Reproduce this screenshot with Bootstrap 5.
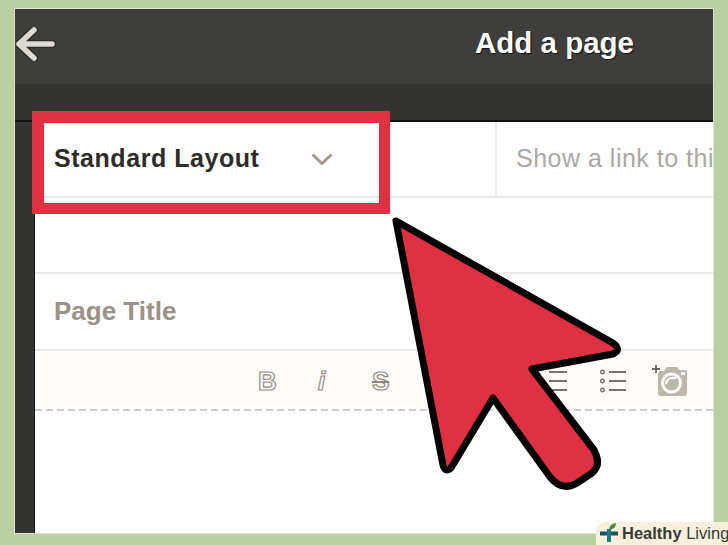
<!DOCTYPE html>
<html lang="en">
<head>
  <meta charset="UTF-8">
  <title>Add a page</title>
  <meta name="viewport" content="width=device-width, initial-scale=1">
  <link href="https://cdn.jsdelivr.net/npm/bootstrap@5.3.3/dist/css/bootstrap.min.css" rel="stylesheet">
  <style>
    html, body {
      height: 545px;
      overflow: hidden;
      background-color: #b9d1a2;
      font-family: "Liberation Sans", Arial, sans-serif;
    }
    .stage {
      width: 728px;
      height: 545px;
      padding: 9px 15px 12px 15px;
    }
    .screen {
      width: 698px;
      height: 524px;
      background-color: #343533;
      outline: 1px solid #dfe8d4;
    }
    .top-bar {
      height: 75px;
      background-color: #3e3e3c;
      padding: 0 79px 6px 1px;
    }
    .top-title {
      font-size: 29.5px;
      font-weight: 700;
      color: #fff;
      text-shadow: 1px 1px 1px #111;
    }
    .sub-bar {
      height: 38px;
      border-bottom: 2px solid #111;
    }
    .side-rail {
      width: 20px;
      border-right: 1px solid #111;
    }
    .form-area {
      background-color: #fff;
    }
    .form-row {
      border-bottom: 2px solid #ebe9e6;
    }
    .row-layout { height: 76px; }
    .row-blank { height: 76px; }
    .row-title { height: 77px; padding-left: 19px; }
    .layout-cell {
      width: 462px;
      padding-left: 19px;
      border-right: 2px solid #efeeeb;
    }
    .layout-name {
      width: 257px;
      font-size: 25px;
      font-weight: 700;
      letter-spacing: .55px;
      color: #2d2c2a;
    }
    .link-cell {
      padding-left: 19px;
      font-size: 25px;
      letter-spacing: .5px;
      color: #aba8a4;
      white-space: nowrap;
    }
    .page-title {
      font-size: 26px;
      font-weight: 700;
      color: #9c9186;
    }
    .tool-row {
      height: 60px;
      padding-left: 223px;
      background-color: #fdfcfa;
      background-image: repeating-linear-gradient(90deg, #d0cdc9 0 7px, transparent 7px 11px);
      background-size: 100% 2px;
      background-position: bottom;
      background-repeat: no-repeat;
    }
    .tool-glyph {
      font-size: 26px;
      font-weight: 700;
      line-height: 1;
      color: #fdfcfa;
      -webkit-text-stroke: 1.2px #948d82;
    }
    .tool-b { width: 60px; }
    .tool-i { width: 49px; font-style: italic; }
    .tool-s { width: 177px; }
    .tool-s span {
      padding: 0 5px;
      text-decoration: line-through;
      text-decoration-thickness: 1.5px;
      text-decoration-color: #8e877d;
    }
    .tool-num { width: 56px; }
    .tool-bul { width: 50px; }
    .red-box {
      left: 32px;
      top: 111px;
      width: 358px;
      height: 103px;
      border-style: solid;
      border-color: #e03143;
      border-width: 12px 11px 11px 12px;
    }
    .big-cursor {
      left: 385px;
      top: 205px;
    }
    .brand-tag {
      right: 0;
      bottom: 0;
      width: 132px;
      height: 23px;
      padding-left: 3px;
      background-color: #f6f0dc;
      border-top-left-radius: 10px;
      font-size: 16.5px;
      line-height: 23px;
      color: #3a3a38;
      white-space: nowrap;
    }
    .brand-tag svg {
      margin-right: 3px;
    }
  </style>
</head>
<body>
  <div class="stage position-relative">
    <div class="screen d-flex flex-column overflow-hidden">
      <!-- Dark header -->
      <div class="top-bar d-flex justify-content-between align-items-center flex-shrink-0">
        <svg width="40" height="34" viewBox="0 0 40 34">
          <path d="M18 3 L3 17 L18 31 M3 17 H36" fill="none" stroke="#2a2a28" stroke-width="8" stroke-linecap="round" stroke-linejoin="round"/>
          <path d="M18 3 L3 17 L18 31 M3 17 H36" fill="none" stroke="#dcd8d2" stroke-width="5.5" stroke-linecap="round" stroke-linejoin="round"/>
        </svg>
        <span class="top-title">Add a page</span>
      </div>
      <div class="sub-bar flex-shrink-0"></div>

      <div class="d-flex flex-grow-1">
        <div class="side-rail flex-shrink-0"></div>
        <div class="form-area flex-grow-1 overflow-hidden">
          <div class="form-row row-layout d-flex">
            <div class="layout-cell d-flex align-items-center flex-shrink-0">
              <span class="layout-name">Standard Layout</span>
              <svg width="22" height="12" viewBox="0 0 22 12">
                <path d="M1.5 1.5 L11 10.5 L20.5 1.5" fill="none" stroke="#a49b90" stroke-width="3"/>
              </svg>
            </div>
            <div class="link-cell d-flex align-items-center">Show a link to thi</div>
          </div>
          <div class="form-row row-blank"></div>
          <div class="form-row row-title d-flex align-items-center">
            <span class="page-title">Page Title</span>
          </div>
          <div class="tool-row d-flex align-items-center">
            <span class="tool-glyph tool-b">B</span>
            <span class="tool-glyph tool-i">i</span>
            <span class="tool-glyph tool-s"><span>S</span></span>
            <svg class="tool-num" width="56" height="24" viewBox="0 0 56 24">
              <path d="M5 3 H23 M5 12 H23 M5 21 H23" stroke="#77726a" stroke-width="2"/>
            </svg>
            <svg class="tool-bul" width="50" height="24" viewBox="0 0 50 24">
              <g fill="none" stroke="#77726a" stroke-width="1.5">
                <circle cx="2.5" cy="3" r="1.7"/>
                <circle cx="2.5" cy="12" r="1.7"/>
                <circle cx="2.5" cy="21" r="1.7"/>
              </g>
              <path d="M9 3 H26 M9 12 H26 M9 21 H26" stroke="#77726a" stroke-width="2"/>
            </svg>
            <svg width="38" height="34" viewBox="0 0 38 34">
              <path d="M6 1 V9 M2 5 H10" stroke="#6c675f" stroke-width="1.8"/>
              <path d="M8 10 Q8 7 11 7 H14 L17 3 H27 L29 6 H35 Q37 6 37 9 V29 Q37 32 34 32 H11 Q8 32 8 29 Z" fill="#bdb6ab"/>
              <rect x="31" y="8" width="4" height="3" fill="#fdfcfa"/>
              <circle cx="21.5" cy="19" r="10.5" fill="#fdfcfa"/>
              <circle cx="21.5" cy="19" r="7.5" fill="#bdb6ab"/>
              <path d="M16 20 Q17 13 26 14" fill="none" stroke="#fdfcfa" stroke-width="2.4"/>
            </svg>
          </div>
        </div>
      </div>
    </div>

    <!-- Red highlight over the layout select -->
    <div class="red-box position-absolute"></div>

    <!-- Big arrow pointer -->
    <svg class="big-cursor position-absolute" width="240" height="295" viewBox="385 205 240 295">
      <path d="M396 221 L613 343 Q622 350 613 354 L532 369 L594 450 Q602 465 592 473 L577 483 Q562 492 550 477 L493 398 L451 468 Q445 473 443 465 Z" fill="#e03143" stroke="#000" stroke-width="7" stroke-linejoin="round"/>
    </svg>

    <!-- Watermark -->
    <div class="brand-tag position-absolute d-flex align-items-center">
      <svg class="flex-shrink-0" width="20" height="23" viewBox="0 0 20 23">
        <path d="M10 8 Q10 2 17 1 Q17 7 10 8 Z" fill="#4c8a3d"/>
        <path d="M1 11.5 H19" stroke="#1c4f63" stroke-width="4"/>
        <path d="M10 7 V20" stroke="#1f7a80" stroke-width="4"/>
      </svg>
      <span><b>Healthy</b> Living</span>
    </div>
  </div>

  <script src="https://cdn.jsdelivr.net/npm/bootstrap@5.3.3/dist/js/bootstrap.bundle.min.js"></script>
</body>
</html>
